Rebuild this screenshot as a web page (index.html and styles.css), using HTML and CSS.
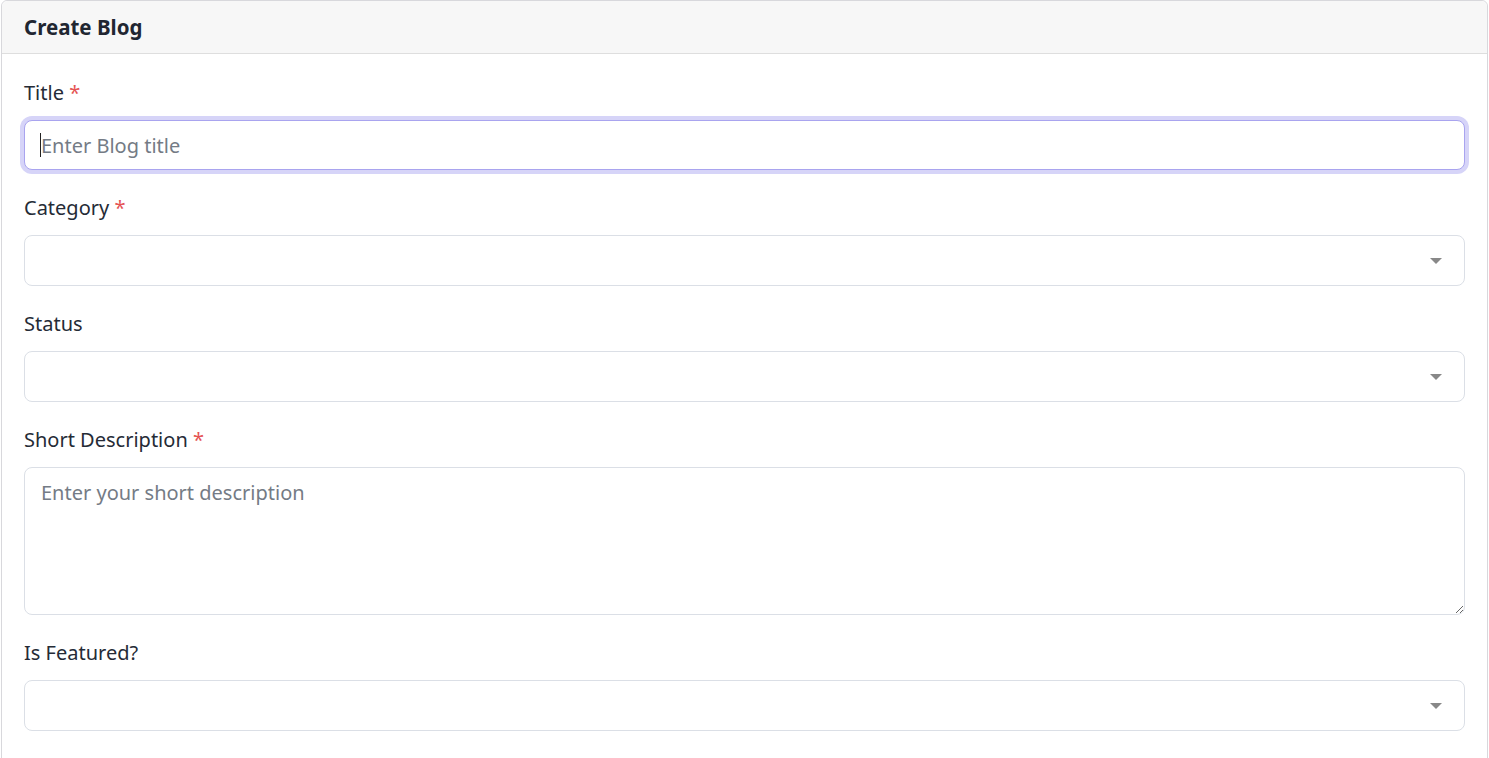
FILE: index.html
```html
<!DOCTYPE html>
<html lang="en">
<head>
<meta charset="utf-8">
<title>Create Blog</title>
<link rel="stylesheet" href="styles.css">
</head>
<body>
<div class="card">
  <div class="card-header">Create Blog</div>
  <form class="card-body">
    <div class="group">
      <label class="label" for="title">Title <span class="req">*</span></label>
      <div class="input-wrap">
        <input id="title" class="control focused" type="text" placeholder="Enter Blog title">
      </div>
    </div>
    <div class="group">
      <label class="label">Category <span class="req">*</span></label>
      <div class="control select"><span class="arrow"></span></div>
    </div>
    <div class="group">
      <label class="label">Status</label>
      <div class="control select"><span class="arrow"></span></div>
    </div>
    <div class="group">
      <label class="label" for="desc">Short Description <span class="req">*</span></label>
      <textarea id="desc" class="control area" placeholder="Enter your short description"></textarea>
    </div>
    <div class="group">
      <label class="label">Is Featured?</label>
      <div class="control select"><span class="arrow"></span></div>
    </div>
  </form>
</div>
</body>
</html>
```

FILE: styles.css
```css
html, body {
  margin: 0;
  padding: 0;
  background: #ffffff;
  overflow: hidden;
}
body {
  font-family: "Noto Sans", "Open Sans", sans-serif;
  color: #212529;
}
.card {
  margin-left: 1px;
  width: 1487px;
  box-sizing: border-box;
  border: 1px solid #d8d8dc;
  border-radius: 6px 6px 0 0;
  background: #fff;
}
.card-header {
  height: 53px;
  box-sizing: border-box;
  padding: 0 22px;
  display: flex;
  align-items: center;
  background: #f7f7f7;
  border-bottom: 1px solid #dedede;
  border-radius: 6px 6px 0 0;
  font-weight: 700;
  font-size: 20.5px;
  color: #212631;
}
.card-body {
  display: block;
  padding: 24px 22px 40px;
}
.group {
  margin-bottom: 23px;
}
.label {
  display: block;
  font-size: 20px;
  line-height: 30px;
  margin-bottom: 12px;
  color: #252b36;
}
.req {
  color: #e55353;
}
.control {
  display: block;
  width: 100%;
  box-sizing: border-box;
  height: 50px;
  border: 1px solid #dbdfe6;
  border-radius: 8px;
  background: #fff;
  padding: 0 16px;
  font-family: inherit;
  font-size: 20px;
  color: #212529;
  outline: none;
}
.control::placeholder {
  color: #747b85;
  opacity: 1;
}
.input-wrap {
  position: relative;
}
.input-wrap::after {
  content: "";
  position: absolute;
  left: 16px;
  top: 13px;
  width: 1px;
  height: 24px;
  background: #222;
}
.focused {
  border-color: #a9a4ef;
  box-shadow: 0 0 0 4px #d6d4f8;
}
.select {
  position: relative;
  height: 51px;
}
.arrow {
  position: absolute;
  right: 22px;
  top: 22px;
  width: 0;
  height: 0;
  border-left: 6px solid transparent;
  border-right: 6px solid transparent;
  border-top: 6px solid #888;
}
.area {
  height: 148px;
  padding: 10px 16px;
  line-height: 1.5;
  resize: vertical;
}
```
